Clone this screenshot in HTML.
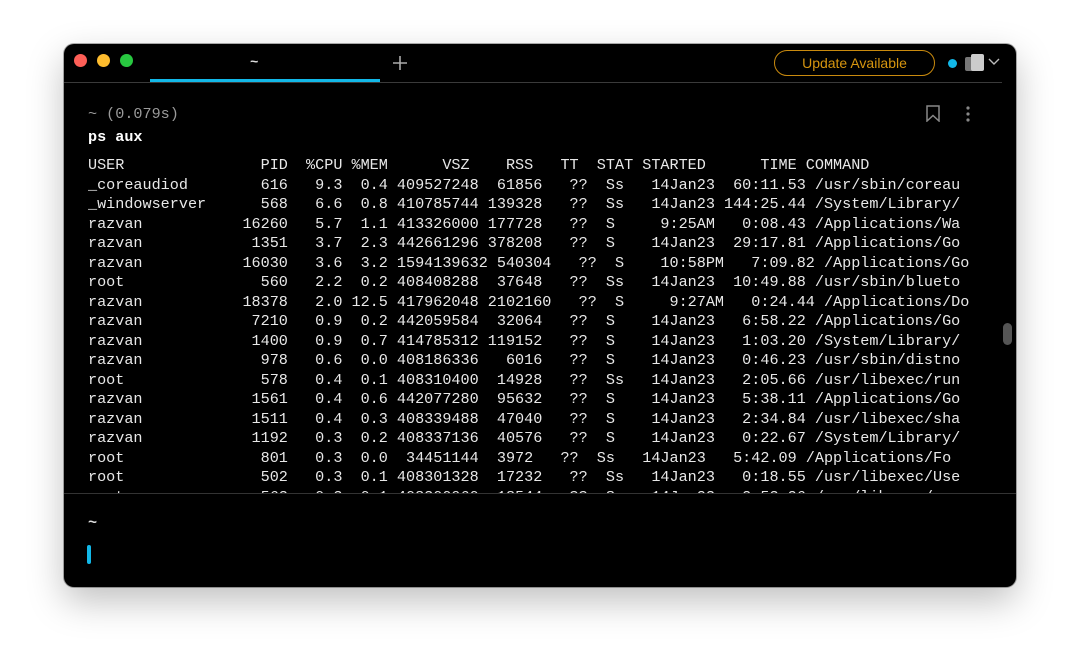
<!DOCTYPE html>
<html><head><meta charset="utf-8"><style>
html,body{margin:0;padding:0;width:1080px;height:672px;background:#fff;overflow:hidden}
.win{position:absolute;left:64px;top:44px;width:952px;height:543px;background:#000;border-radius:10px;box-shadow:0 14px 36px rgba(0,0,0,.25),0 0 0 1px rgba(0,0,0,.3);overflow:hidden}
.dot{position:absolute;top:10px;width:13px;height:13px;border-radius:50%}
.mono{font-family:"Liberation Mono","DejaVu Sans Mono",monospace;font-size:15.15px}
.out{position:absolute;left:24px;top:112px;white-space:pre;line-height:19.5px;color:#e8e8e8;height:337px;overflow:hidden;width:910px}
</style></head><body>
<div class="win">
  <div class="dot" style="left:10px;background:#fe5f57"></div>
  <div class="dot" style="left:33px;background:#febc2e"></div>
  <div class="dot" style="left:56px;background:#28c840"></div>
  <div class="mono" style="position:absolute;left:186px;top:11px;color:#ddd;font-size:14px;font-weight:bold">~</div>
  <div style="position:absolute;left:86px;top:35px;width:230px;height:3px;background:#12b8e8"></div>
  <div style="position:absolute;left:0;top:38px;width:938px;height:1px;background:#3a3a3a"></div>
  <svg style="position:absolute;left:328px;top:11px" width="16" height="16"><path d="M8 1V15M1 8H15" stroke="#aaa" stroke-width="1.6"/></svg>
  <div style="position:absolute;left:710px;top:6px;width:159px;height:24px;border:1.3px solid #c98a0e;border-radius:13px;color:#d6950f;font-family:'Liberation Sans',sans-serif;font-size:14px;line-height:24px;text-align:center">Update Available</div>
  <div style="position:absolute;left:884px;top:15px;width:9px;height:9px;border-radius:50%;background:#12b8e8"></div>
  <div style="position:absolute;left:901px;top:13px;width:11px;height:14px;background:#777;border-radius:2px"></div>
  <div style="position:absolute;left:907px;top:10px;width:13px;height:17px;background:#ccc;border-radius:2px"></div>
  <svg style="position:absolute;left:924px;top:14px" width="12" height="8"><path d="M1 1L6 6L11 1" stroke="#bbb" stroke-width="1.4" fill="none"/></svg>
  <svg style="position:absolute;left:862px;top:61px" width="14" height="17"><path d="M1 1H13V16L7 10.5L1 16Z" stroke="#888" stroke-width="1.5" fill="none"/></svg>
  <svg style="position:absolute;left:902px;top:62px" width="4" height="16"><circle cx="2" cy="2" r="1.6" fill="#888"/><circle cx="2" cy="8" r="1.6" fill="#888"/><circle cx="2" cy="14" r="1.6" fill="#888"/></svg>
  <div class="mono" style="position:absolute;left:24px;top:60px;color:#9a9a9a;line-height:20px">~ (0.079s)</div>
  <div class="mono" style="position:absolute;left:24px;top:83px;color:#fff;font-weight:bold;line-height:20px">ps aux</div>
  <div class="mono out">USER               PID  %CPU %MEM      VSZ    RSS   TT  STAT STARTED      TIME COMMAND
_coreaudiod        616   9.3  0.4 409527248  61856   ??  Ss   14Jan23  60:11.53 /usr/sbin/coreau
_windowserver      568   6.6  0.8 410785744 139328   ??  Ss   14Jan23 144:25.44 /System/Library/
razvan           16260   5.7  1.1 413326000 177728   ??  S     9:25AM   0:08.43 /Applications/Wa
razvan            1351   3.7  2.3 442661296 378208   ??  S    14Jan23  29:17.81 /Applications/Go
razvan           16030   3.6  3.2 1594139632 540304   ??  S    10:58PM   7:09.82 /Applications/Go
root               560   2.2  0.2 408408288  37648   ??  Ss   14Jan23  10:49.88 /usr/sbin/blueto
razvan           18378   2.0 12.5 417962048 2102160   ??  S     9:27AM   0:24.44 /Applications/Do
razvan            7210   0.9  0.2 442059584  32064   ??  S    14Jan23   6:58.22 /Applications/Go
razvan            1400   0.9  0.7 414785312 119152   ??  S    14Jan23   1:03.20 /System/Library/
razvan             978   0.6  0.0 408186336   6016   ??  S    14Jan23   0:46.23 /usr/sbin/distno
root               578   0.4  0.1 408310400  14928   ??  Ss   14Jan23   2:05.66 /usr/libexec/run
razvan            1561   0.4  0.6 442077280  95632   ??  S    14Jan23   5:38.11 /Applications/Go
razvan            1511   0.4  0.3 408339488  47040   ??  S    14Jan23   2:34.84 /usr/libexec/sha
razvan            1192   0.3  0.2 408337136  40576   ??  S    14Jan23   0:22.67 /System/Library/
root               801   0.3  0.0  34451144  3972   ??  Ss   14Jan23   5:42.09 /Applications/Fo
root               502   0.3  0.1 408301328  17232   ??  Ss   14Jan23   0:18.55 /usr/libexec/Use
root               563   0.3  0.1 408300960  18544   ??  Ss   14Jan23   2:53.26 /usr/libexec/ano</div>
  <div style="position:absolute;left:0;top:449px;width:952px;height:1px;background:#333"></div>
  <div style="position:absolute;left:939px;top:279px;width:9px;height:22px;border-radius:5px;background:#555"></div>
  <div class="mono" style="position:absolute;left:24px;top:469px;color:#ddd;font-weight:bold;line-height:20px">~</div>
  <div style="position:absolute;left:23px;top:501px;width:4px;height:19px;border-radius:2px;background:#12b8e8"></div>
</div>
</body></html>
